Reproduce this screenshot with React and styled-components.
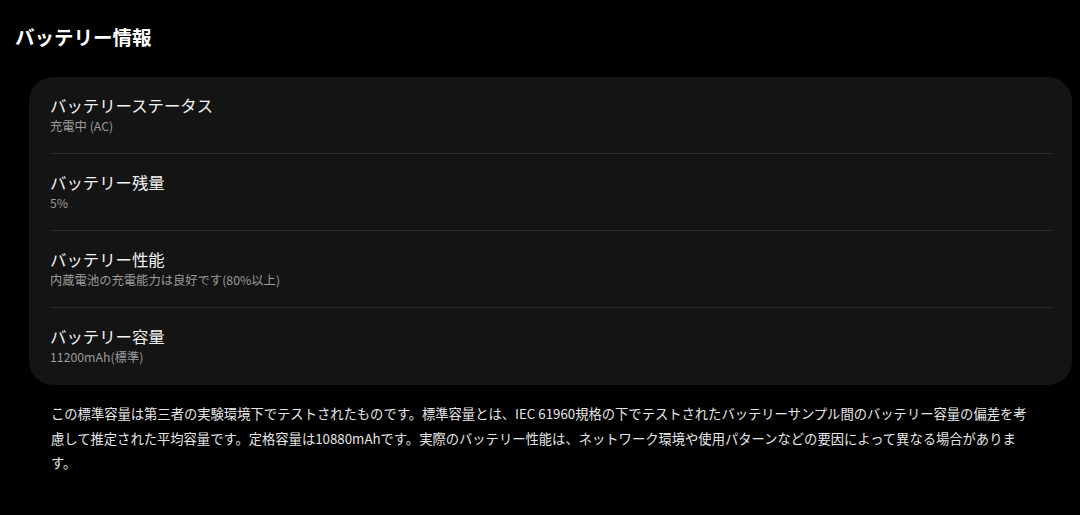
import React from 'react';
import styled, { createGlobalStyle } from 'styled-components';

const GlobalStyle = createGlobalStyle`
  html, body {
    margin: 0;
    padding: 0;
    background: #000;
  }
  body {
    font-family: "Noto Sans CJK JP", "Noto Sans", sans-serif;
    color: #fff;
  }
`;

const Page = styled.div`
  width: 1080px;
  height: 515px;
  background: #000;
  padding: 23px 8px 0 15px;
  box-sizing: border-box;
`;

const Heading = styled.h1`
  margin: 0;
  font-size: 19.5px;
  font-weight: 700;
  line-height: 28px;
`;

const Card = styled.div`
  margin: 26px 0 0 14px;
  background: #141414;
  border-radius: 24px;
  padding: 0 20px 0 21px;
`;

const Row = styled.div`
  height: 77px;
  box-sizing: border-box;
  padding-top: 17px;
  border-bottom: ${(p) => (p.$last ? 'none' : '1px solid #2a2a2a')};
`;

const Label = styled.div`
  font-size: 16.4px;
  line-height: 23px;
  color: #f2f2f2;
`;

const Value = styled.div`
  font-size: 12.3px;
  line-height: 18px;
  color: #9b9b9b;
`;

const Note = styled.p`
  margin: 17px 0 0 36px;
  width: 986px;
  font-size: 13.3px;
  line-height: 24.5px;
  color: #e6e6e6;
`;

const rows = [
  { label: 'バッテリーステータス', value: '充電中 (AC)' },
  { label: 'バッテリー残量', value: '5%' },
  { label: 'バッテリー性能', value: '内蔵電池の充電能力は良好です(80%以上)' },
  { label: 'バッテリー容量', value: '11200mAh(標準)' },
];

export default function App() {
  return (
    <>
      <GlobalStyle />
      <Page>
        <Heading>バッテリー情報</Heading>
        <Card>
          {rows.map((r, i) => (
            <Row key={r.label} $last={i === rows.length - 1}>
              <Label>{r.label}</Label>
              <Value>{r.value}</Value>
            </Row>
          ))}
        </Card>
        <Note>
          この標準容量は第三者の実験環境下でテストされたものです。標準容量とは、IEC 61960規格の下でテストされたバッテリーサンプル間のバッテリー容量の偏差を考慮して推定された平均容量です。定格容量は10880mAhです。実際のバッテリー性能は、ネットワーク環境や使用パターンなどの要因によって異なる場合があります。
        </Note>
      </Page>
    </>
  );
}
